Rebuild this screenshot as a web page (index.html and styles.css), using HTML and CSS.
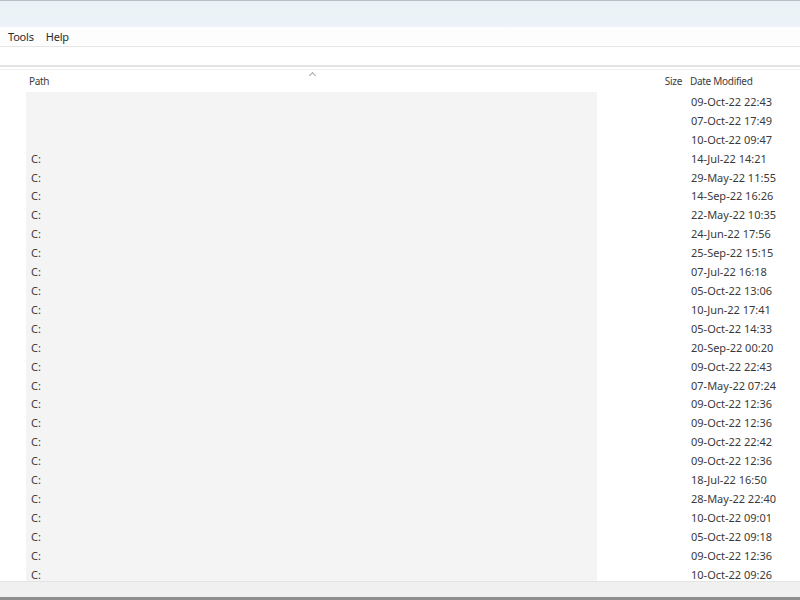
FILE: index.html
```html
<!DOCTYPE html>
<html lang="en">
<head>
    <meta charset="UTF-8">
    <title>Search</title>
    <link rel="stylesheet" href="styles.css">
</head>
<body>
    <div class="titlebar"></div>
    <div class="menubar">
        <span class="menu-item">Tools</span>
        <span class="menu-item">Help</span>
    </div>
    <div class="toolbar"></div>

    <div class="results">
        <div class="header">
            <div class="gutter"></div>
            <div class="col-path">Path</div>
            <div class="col-size">Size</div>
            <div class="col-date">Date Modified</div>
            <span class="sort-arrow"></span>
        </div>
        <div class="rows" id="rows"></div>
    </div>

    <div class="statusbar"></div>

    <script>
        // 行数据: 路径, 修改时间
        let rows = [
            ['', '09-Oct-22 22:43'],
            ['', '07-Oct-22 17:49'],
            ['', '10-Oct-22 09:47'],
            ['C:', '14-Jul-22 14:21'],
            ['C:', '29-May-22 11:55'],
            ['C:', '14-Sep-22 16:26'],
            ['C:', '22-May-22 10:35'],
            ['C:', '24-Jun-22 17:56'],
            ['C:', '25-Sep-22 15:15'],
            ['C:', '07-Jul-22 16:18'],
            ['C:', '05-Oct-22 13:06'],
            ['C:', '10-Jun-22 17:41'],
            ['C:', '05-Oct-22 14:33'],
            ['C:', '20-Sep-22 00:20'],
            ['C:', '09-Oct-22 22:43'],
            ['C:', '07-May-22 07:24'],
            ['C:', '09-Oct-22 12:36'],
            ['C:', '09-Oct-22 12:36'],
            ['C:', '09-Oct-22 22:42'],
            ['C:', '09-Oct-22 12:36'],
            ['C:', '18-Jul-22 16:50'],
            ['C:', '28-May-22 22:40'],
            ['C:', '10-Oct-22 09:01'],
            ['C:', '05-Oct-22 09:18'],
            ['C:', '09-Oct-22 12:36'],
            ['C:', '10-Oct-22 09:26']
        ]

        const list = document.querySelector('#rows')
        for (let i = 0; i < rows.length; i++) {
            list.innerHTML += `
                <div class="row">
                    <div class="gutter"></div>
                    <div class="col-path">${rows[i][0]}</div>
                    <div class="col-size"></div>
                    <div class="col-date">${rows[i][1]}</div>
                </div>
            `
        }
    </script>
</body>
</html>
```

FILE: styles.css
```css
body {
    margin: 0;
    padding: 0;
    width: 800px;
    height: 600px;
    overflow: hidden;
    background: #fff;
    font-family: "Noto Sans", "Open Sans", sans-serif;
    font-size: 11px;
    color: #3a3a3a;
    display: flex;
    flex-direction: column;
}
.titlebar {
    height: 26px;
    flex: none;
    border-top: 1px solid #b9bec2;
    background: linear-gradient(#e9f2f6, #edf3f8);
}
.menubar {
    height: 19px;
    flex: none;
    display: flex;
    align-items: center;
    padding-left: 8px;
    gap: 12px;
    font-size: 11px;
    letter-spacing: -0.2px;
    color: #2c2c2c;
    background: #fdfdfd;
    border-bottom: 1px solid #e6e6e6;
}
.toolbar {
    height: 18px;
    flex: none;
    background: #fff;
    border-bottom: 2px solid #e3e3e3;
}
.results {
    flex: 1;
    min-height: 0;
    display: flex;
    flex-direction: column;
    margin-top: 2px;
}
.header, .row {
    display: flex;
}
.header {
    height: 22px;
    flex: none;
    align-items: center;
    position: relative;
    border-top: 1px solid #f0f0f0;
    color: #3c3c3c;
    font-size: 10px;
    letter-spacing: -0.3px;
}
.gutter {
    width: 26px;
    flex: none;
}
.col-path {
    width: 568px;
    padding-left: 3px;
    flex: none;
}
.col-size {
    width: 89px;
    flex: none;
    text-align: right;
    padding-right: 4px;
    box-sizing: border-box;
}
.col-date {
    flex: 1;
    padding-left: 4px;
}
.sort-arrow {
    position: absolute;
    left: 310px;
    top: 3px;
    width: 4px;
    height: 4px;
    border-left: 1px solid #a8a8a8;
    border-top: 1px solid #a8a8a8;
    transform: rotate(45deg);
}
.rows {
    flex: 1;
    overflow: hidden;
}
.row {
    height: 18.92px;
    line-height: 13px;
    align-items: center;
}
.row .col-path {
    background: #f4f4f4;
    align-self: stretch;
    display: flex;
    align-items: center;
    padding-left: 5px;
    width: 566px;
}
.row .col-date {
    padding-left: 5px;
}
.statusbar {
    height: 15px;
    flex: none;
    background: #f0f0f0;
    border-top: 1px solid #e4e4e4;
    border-bottom: 3px solid #8e8e8e;
}
```
